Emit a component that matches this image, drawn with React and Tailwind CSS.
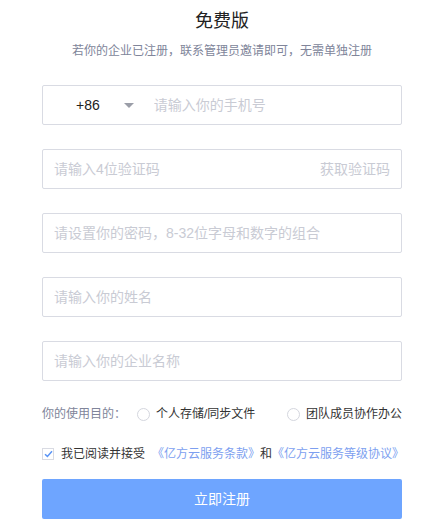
import React, { useState } from "react";

const font = { fontFamily: '"Liberation Sans", "Noto Sans CJK SC", sans-serif' };

const Field = ({ placeholder, right }) => (
  <div className="flex h-10 items-center border border-[#d9dbe3] rounded-[2px] px-[11px] mt-6">
    <input
      className="flex-1 min-w-0 outline-none text-sm text-[#333] placeholder:text-[#c9cbd4] bg-transparent"
      placeholder={placeholder}
    />
    {right && <span className="text-sm text-[#c9cbd4] whitespace-nowrap">{right}</span>}
  </div>
);

const Radio = ({ label, checked, onClick, className = "" }) => (
  <label className={`flex items-center shrink-0 whitespace-nowrap cursor-pointer ${className}`} onClick={onClick}>
    <span className={`w-[13px] h-[13px] rounded-full border ${checked ? "border-[#6ea5ff]" : "border-[#d4d6de]"} mr-[6px]`} />
    <span className="text-xs text-[#333]">{label}</span>
  </label>
);

export default function App() {
  const [purpose, setPurpose] = useState("");

  return (
    <div className="w-full h-[523px] bg-white overflow-hidden" style={font}>
      <div className="ml-[42px] w-[360px]">
        <h1 className="pt-[9px] text-center text-[18px] leading-6 text-[#222]">免费版</h1>
        <p className="mt-[9px] text-center text-xs leading-[18px] text-[#80859a] whitespace-nowrap">
          若你的企业已注册，联系管理员邀请即可，无需单独注册
        </p>

        <div className="flex h-10 items-center border border-[#d9dbe3] rounded-[2px] mt-[25px]">
          <span className="ml-[33px] text-sm text-[#222]">+86</span>
          <span className="ml-[24px] w-0 h-0 border-l-[5px] border-r-[5px] border-t-[5px] border-l-transparent border-r-transparent border-t-[#9b9ea8]" />
          <input
            className="ml-[20px] flex-1 min-w-0 outline-none text-sm placeholder:text-[#c9cbd4]"
            placeholder="请输入你的手机号"
          />
        </div>
        <Field placeholder="请输入4位验证码" right="获取验证码" />
        <Field placeholder="请设置你的密码，8-32位字母和数字的组合" />
        <Field placeholder="请输入你的姓名" />
        <Field placeholder="请输入你的企业名称" />

        <div className="flex items-center mt-[23px] h-5 whitespace-nowrap">
          <span className="w-[95px] shrink-0 text-xs text-[#80859a]">你的使用目的：</span>
          <Radio label="个人存储/同步文件" checked={purpose === "p"} onClick={() => setPurpose("p")} />
          <Radio className="ml-auto" label="团队成员协作办公" checked={purpose === "t"} onClick={() => setPurpose("t")} />
        </div>

        <div className="flex items-center mt-5 h-5 text-xs whitespace-nowrap">
          <span className="w-3 h-3 shrink-0 border border-[#d9dbe3] flex items-center justify-center mr-[7px]">
            <svg width="9" height="8" viewBox="0 0 9 8">
              <path d="M1 4.2 L3.4 6.4 L8 1.2" fill="none" stroke="#5b95f5" strokeWidth="1.5" />
            </svg>
          </span>
          <span className="text-[#333]">我已阅读并接受</span>
          <a className="ml-[7px] text-[#7d9ff0]" href="#">《亿方云服务条款》</a>
          <span className="text-[#333]">和</span>
          <a className="text-[#7d9ff0]" href="#">《亿方云服务等级协议》</a>
        </div>

        <button className="mt-[15px] w-full h-10 rounded-[2px] bg-[#6ea5ff] text-white text-sm">
          立即注册
        </button>
      </div>
    </div>
  );
}
